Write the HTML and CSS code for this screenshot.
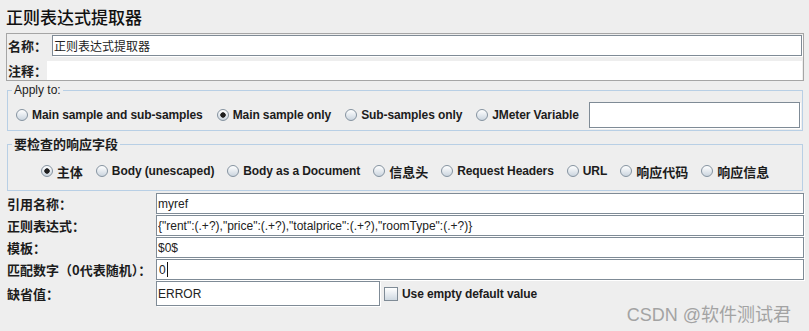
FILE: index.html
```html
<!DOCTYPE html>
<html>

<head>
  <meta charset="utf-8" />
  <title>正则表达式提取器</title>
  <link rel="stylesheet" href="styles.css">
</head>

<body>
  <div class="page">
    <div class="title">正则表达式提取器</div>

    <div class="namebox">
      <div class="namerow">
        <label class="name-label">名称：</label>
        <input type="text" class="field" value="正则表达式提取器" />
      </div>
      <div class="namerow comment">
        <label class="name-label">注释：</label>
        <input type="text" class="field plain" />
      </div>
    </div>

    <fieldset class="group apply">
      <legend>Apply to:</legend>
      <div class="options">
        <label class="opt"><input type="radio" name="scope" class="radio" />Main sample and sub-samples</label>
        <label class="opt"><input type="radio" name="scope" class="radio" checked />Main sample only</label>
        <label class="opt"><input type="radio" name="scope" class="radio" />Sub-samples only</label>
        <label class="opt"><input type="radio" name="scope" class="radio" />JMeter Variable</label>
        <input type="text" class="field var" />
      </div>
    </fieldset>

    <fieldset class="group fields">
      <legend>要检查的响应字段</legend>
      <div class="options center">
        <label class="opt cn"><input type="radio" name="field" class="radio" checked />主体</label>
        <label class="opt"><input type="radio" name="field" class="radio" />Body (unescaped)</label>
        <label class="opt"><input type="radio" name="field" class="radio" />Body as a Document</label>
        <label class="opt cn"><input type="radio" name="field" class="radio" />信息头</label>
        <label class="opt"><input type="radio" name="field" class="radio" />Request Headers</label>
        <label class="opt"><input type="radio" name="field" class="radio" />URL</label>
        <label class="opt cn"><input type="radio" name="field" class="radio" />响应代码</label>
        <label class="opt cn"><input type="radio" name="field" class="radio" />响应信息</label>
      </div>
    </fieldset>

    <div class="form">
      <label class="form-label">引用名称：</label>
      <input type="text" class="field" value="myref" />

      <label class="form-label">正则表达式：</label>
      <input type="text" class="field" value='{"rent":(.+?),"price":(.+?),"totalprice":(.+?),"roomType":(.+?)}' />

      <label class="form-label">模板：</label>
      <input type="text" class="field" value="$0$" />

      <label class="form-label">匹配数字（0代表随机）：</label>
      <div class="field caret-field"><span>0</span><span class="caret"></span></div>

      <label class="form-label tall">缺省值：</label>
      <div class="default-row">
        <input type="text" class="field default" value="ERROR" />
        <label class="opt check"><input type="checkbox" class="checkbox" />Use empty default value</label>
      </div>
    </div>

    <div class="watermark">CSDN @软件测试君</div>
  </div>
</body>

</html>
```

FILE: styles.css
```css
html,
body {
  margin: 0;
  background-color: #eeeeee;
}

body {
  font-family: "Liberation Sans", Arial, "Noto Sans CJK SC", sans-serif;
  font-size: 12px;
  color: #1c1c1c;
}

.page {
  position: relative;
  height: 331px;
  box-sizing: border-box;
  padding: 0 5px 0 6px;
}

.title {
  font-family: "Noto Sans CJK SC", sans-serif;
  font-size: 17px;
  font-weight: 500;
  line-height: 22px;
  padding-top: 6px;
  margin-bottom: 5px;
  color: #111;
}

/* name / comment box */
.namebox {
  border: 1px solid #a5a5a5;
  padding: 1px 1px 0 1px;
}

.namerow {
  display: flex;
  align-items: center;
  height: 21px;
}

.namerow.comment {
  height: 19px;
  margin-top: 5px;
}

.name-label {
  font-family: "Noto Sans CJK SC", sans-serif;
  font-size: 13px;
  font-weight: bold;
  width: 44px;
  flex: none;
}

.comment .name-label {
  width: 39px;
}

.field {
  flex: 1;
  min-width: 0;
  height: 21px;
  box-sizing: border-box;
  margin: 0;
  padding: 0 1px;
  border: 1px solid #7f8b96;
  box-shadow: 1px 1px 0 #fff;
  background-color: #fff;
  font-family: "Liberation Sans", Arial, "Noto Sans CJK SC", sans-serif;
  font-size: 12px;
  color: #222;
  outline: none;
  border-radius: 0;
}

.field.plain {
  height: 19px;
  border: none;
  box-shadow: none;
}

.caret-field {
  display: flex;
  align-items: center;
  padding-left: 2px;
}

.caret {
  width: 1px;
  height: 15px;
  margin-left: 1px;
  background-color: #111;
}

/* titled groups */
.group {
  border: 1px solid #b8cfe5;
  margin: 0 1px;
  padding: 0;
  min-width: 0;
}

.group legend {
  padding: 0 2px;
  margin-left: 4px;
  line-height: 14px;
}

.apply {
  margin-top: 2px;
}

.fields {
  margin-top: 5px;
}

.fields legend {
  font-family: "Noto Sans CJK SC", sans-serif;
  font-size: 13px;
  font-weight: bold;
  line-height: 16px;
}

.options {
  display: flex;
  align-items: center;
  gap: 14px;
  padding: 5px 2px 2px 8px;
}

.options.center {
  justify-content: center;
  gap: 13px;
  height: 16px;
  padding: 11px 0;
}

.field.var {
  height: 26px;
  margin-left: -4px;
}

.opt {
  display: flex;
  align-items: center;
  font-weight: bold;
  letter-spacing: -0.1px;
  white-space: nowrap;
}

.opt.cn {
  font-family: "Noto Sans CJK SC", sans-serif;
  font-size: 13px;
  letter-spacing: 0;
}

.radio {
  appearance: none;
  width: 12px;
  height: 12px;
  box-sizing: border-box;
  margin: 0 4px 0 0;
  border: 1px solid #8593a0;
  border-radius: 50%;
  background: linear-gradient(#ffffff, #cbd5df);
}

.radio:checked {
  background: radial-gradient(circle, #1e1e1e 0 2.4px, transparent 3px), linear-gradient(#ffffff, #cbd5df);
}

/* form rows */
.form {
  display: grid;
  grid-template-columns: 150px 1fr;
  grid-auto-rows: 21px;
  row-gap: 1px;
  margin-top: 2px;
}

.form .field {
  height: 21px;
}

.form-label {
  display: flex;
  align-items: center;
  padding-left: 1px;
  font-family: "Noto Sans CJK SC", sans-serif;
  font-size: 13px;
  font-weight: bold;
  white-space: nowrap;
}

.default-row {
  display: flex;
  align-items: center;
  height: 25px;
}

.form .field.default {
  flex: none;
  width: 224px;
  height: 25px;
}

.form-label.tall {
  height: 25px;
}

.check {
  margin-left: 4px;
}

.checkbox {
  appearance: none;
  width: 14px;
  height: 14px;
  box-sizing: border-box;
  margin: 0 4px 0 0;
  border: 1px solid #7f8b96;
  background: linear-gradient(#ffffff, #cfd9e2);
}

.watermark {
  position: absolute;
  right: 18px;
  bottom: 6px;
  font-family: "Liberation Sans", Arial, "Noto Sans CJK SC", sans-serif;
  font-size: 18px;
  line-height: 20px;
  color: #a3a3a3;
}
```
